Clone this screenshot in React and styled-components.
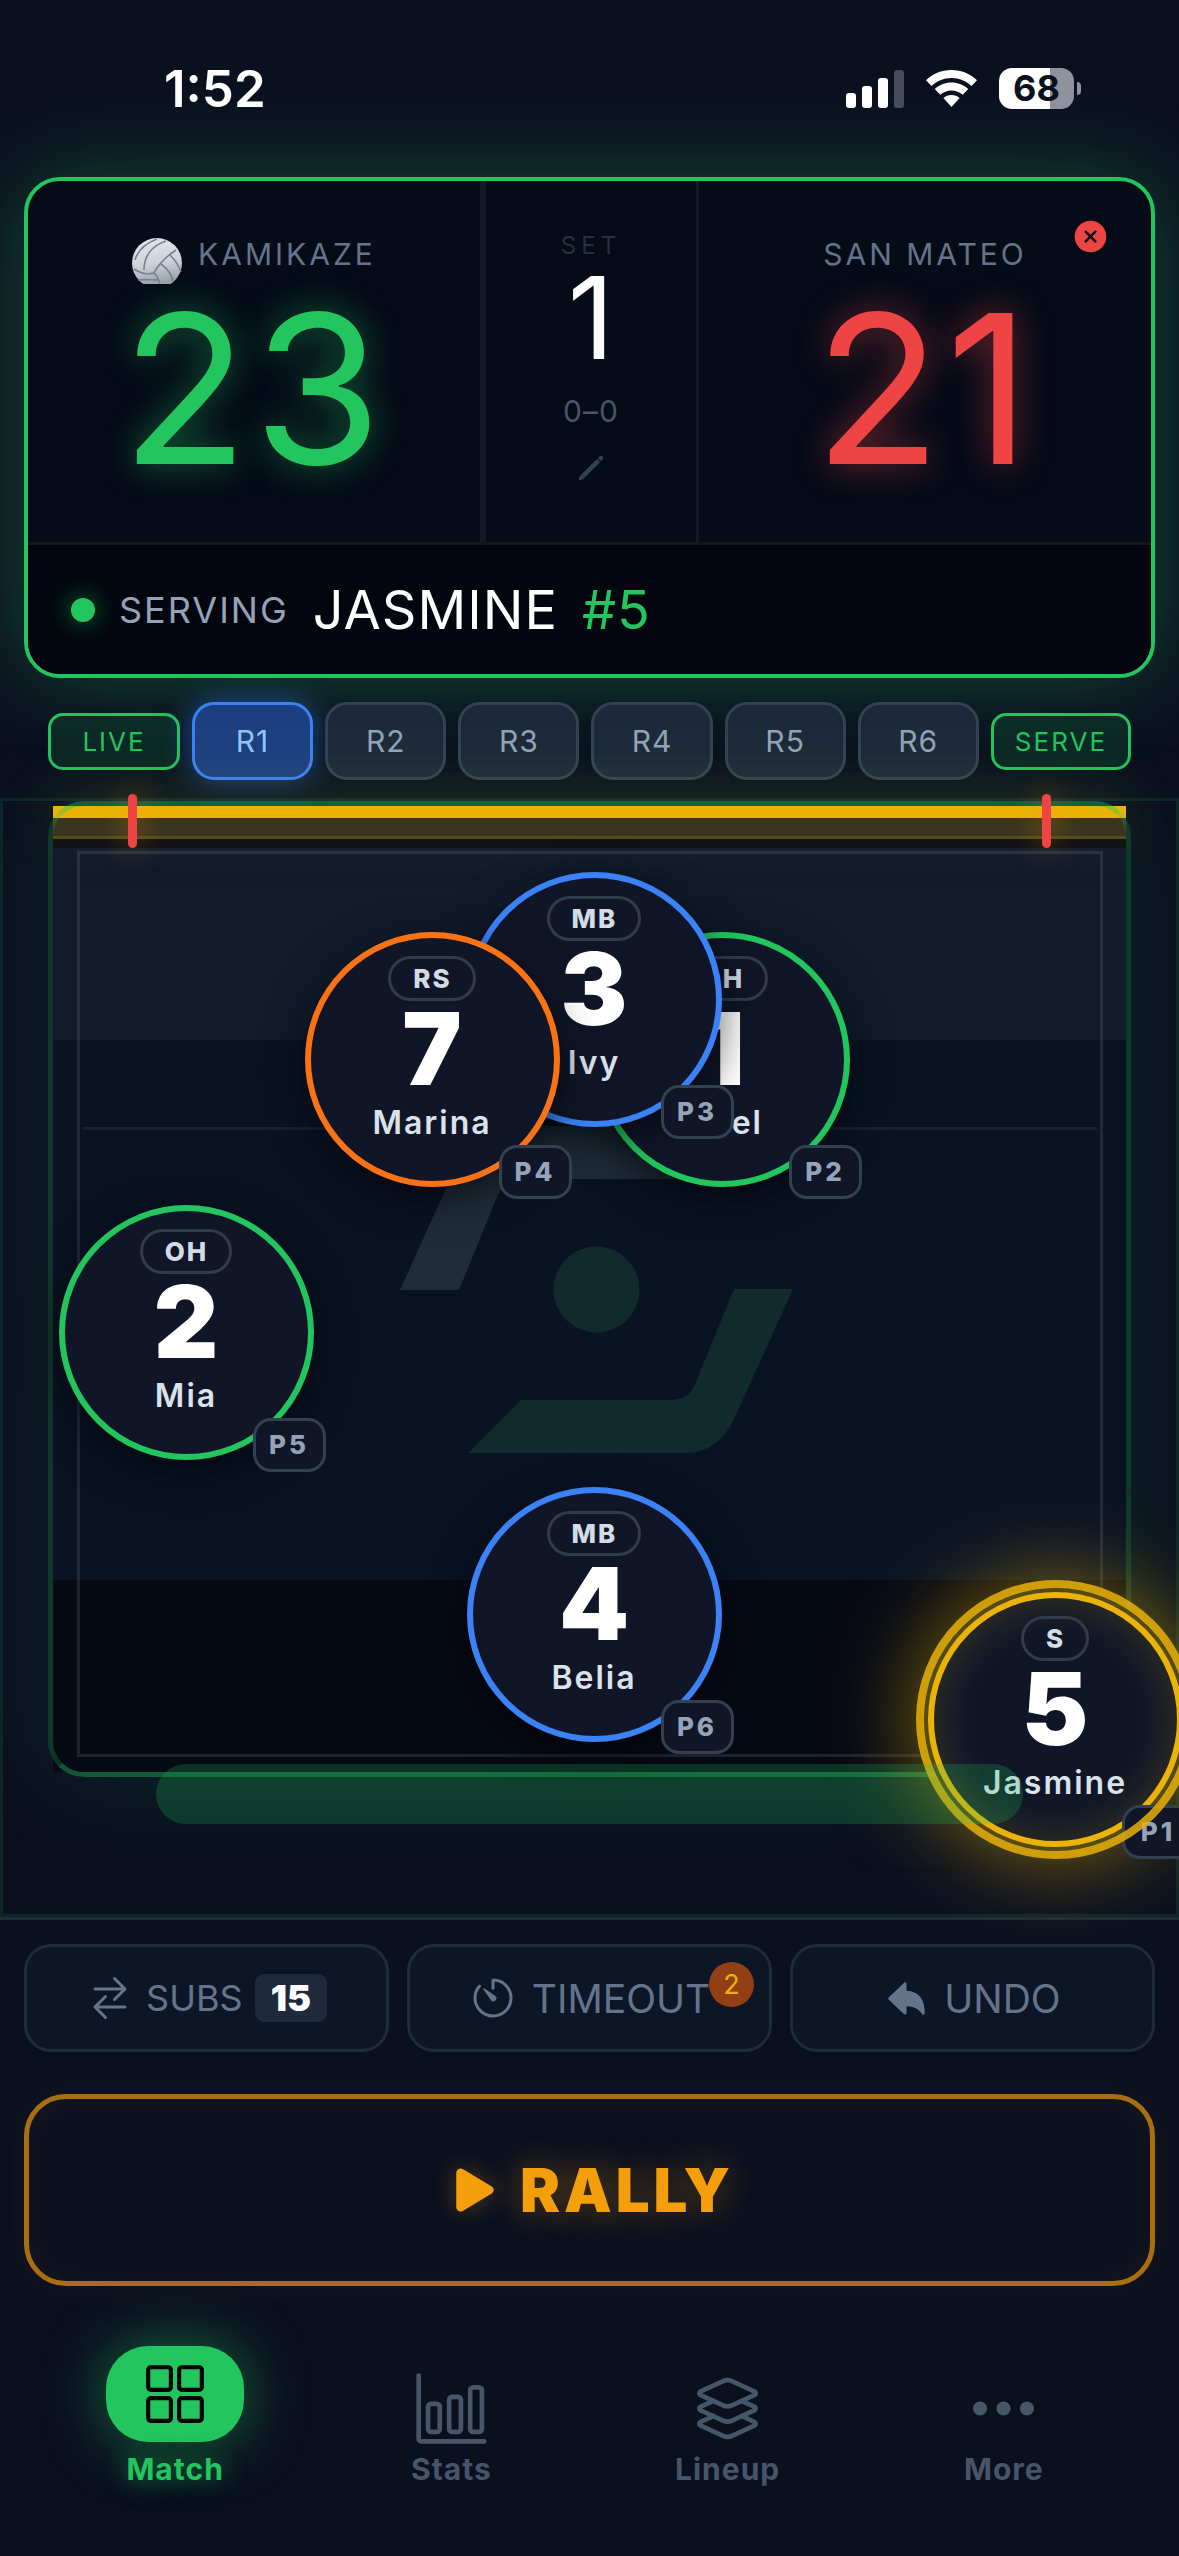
import React from 'react'
import styled, { createGlobalStyle, css } from 'styled-components'
import {
  IoArrowUndo,
  IoBarChartOutline,
  IoCloseCircle,
  IoEllipsisHorizontal,
  IoGridOutline,
  IoLayersOutline,
  IoPencil,
  IoPlay,
  IoSwapHorizontalOutline,
  IoTimerOutline,
} from 'react-icons/io5'

const green = '#22c55e'
const red = '#ef4444'
const blue = '#3b82f6'
const orange = '#f97316'
const gold = '#eab308'

const GlobalStyle = createGlobalStyle`
* { box-sizing: border-box; }
body {
  margin: 0;
  background: #0b101f;
  color: #fff;
  font-family: Inter, "Liberation Sans", sans-serif;
}
button {
  font: inherit;
  color: inherit;
  padding: 0;
  cursor: pointer;
}
svg { display: block; flex: none; }
`

const Page = styled.div`
display: flex;
flex-direction: column;
min-height: 100vh;
overflow: hidden;
`

/* status bar */
const StatusBar = styled.header`
display: flex;
justify-content: space-between;
align-items: center;
height: 177px;
padding: 0 98px 0 164px;
`
const Clock = styled.time`
font-size: 51px;
font-weight: 600;
line-height: 58px;
`
const StatusIcons = styled.div`
display: flex;
align-items: center;
gap: 22px;
`
const Battery = styled.div`
position: relative;
width: 75px;
height: 41px;
margin-right: 7px;
border-radius: 13px;
background: linear-gradient(90deg, #fff 68%, #8d929c 68%);
color: #0b101f;
font-size: 36px;
font-weight: 700;
line-height: 41px;
text-align: center;
&::after {
  content: "";
  position: absolute;
  left: 78px;
  top: 14px;
  width: 4px;
  height: 13px;
  border-radius: 0 4px 4px 0;
  background: #8d929c;
}
`

/* scoreboard */
const Scoreboard = styled.section`
margin: 0 24px;
border: 4px solid ${green};
border-radius: 36px;
background: #050b17;
box-shadow: 0 0 90px rgba(34, 197, 94, 0.32);
`
const ScoreRow = styled.div`
display: flex;
height: 361px;
`
const Team = styled.div`
position: relative;
display: flex;
flex: 1 1 0;
flex-direction: column;
align-items: center;
box-sizing: content-box;
padding-top: 55px;
&:first-child { border-right: 3px solid #131925; }
`
const TeamName = styled.h2`
display: flex;
gap: 16px;
height: 48px;
margin: 0 0 12px;
color: #64748b;
font-size: 30px;
font-weight: 400;
line-height: 36px;
letter-spacing: 3px;
`
const Score = styled.div`
color: ${p => p.$color};
font-size: 208px;
line-height: 184px;
letter-spacing: 5px;
text-shadow: 0 0 36px ${p => p.$glow};
`
const CloseButton = styled.button`
position: absolute;
top: 36px;
right: 41px;
border: 0;
background: none;
color: ${red};
`
const SetColumn = styled.div`
display: flex;
flex: 0 0 216px;
flex-direction: column;
align-items: center;
padding-top: 50px;
border: solid #131925;
border-width: 0 3px;
`
const SetLabel = styled.span`
color: #26313f;
font-size: 24px;
line-height: 30px;
letter-spacing: 5px;
`
const SetNumber = styled.strong`
font-size: 114px;
font-weight: 400;
line-height: 114px;
`
const SetTally = styled.span`
margin: 18px 0 24px;
color: #475569;
font-size: 30px;
line-height: 36px;
letter-spacing: 1px;
`
const EditButton = styled.button`
border: 0;
background: none;
color: #334155;
`
const ServingRow = styled.div`
display: flex;
align-items: center;
height: 132px;
padding-left: 43px;
border-top: 3px solid #13161b;
border-radius: 0 0 32px 32px;
background: #03060e;
font-size: 54px;
letter-spacing: 1px;
`
const ServingDot = styled.i`
width: 24px;
height: 24px;
border-radius: 50%;
background: ${green};
box-shadow: 0 0 24px rgba(34, 197, 94, 0.6);
`
const ServingLabel = styled.span`
margin: 0 24px;
color: #94a3b8;
font-size: 36px;
letter-spacing: 2px;
`
const ServerNumber = styled.span`
margin-left: 24px;
color: ${green};
`

/* rotations */
const Rotations = styled.div`
display: flex;
align-items: center;
gap: 12px;
padding: 24px 48px 18px;
`
const ModeButton = styled.button`
min-width: 132px;
height: 57px;
padding: 0 21px;
border: 3px solid ${green};
border-radius: 15px;
background: rgba(34, 197, 94, 0.12);
color: ${green};
font-size: 26px;
letter-spacing: 2px;
`
const RotationButton = styled.button`
flex: 1;
height: 78px;
border: 3px solid #334155;
border-radius: 22px;
background: #1e293b;
color: #94a3b8;
font-size: 30px;
letter-spacing: 1px;
${p => p.$active && css`
  border-color: ${blue};
  background: #1e3f82;
  color: #93c5fd;
  box-shadow: 0 0 30px rgba(59, 130, 246, 0.5);
`}
`

/* court */
const CourtArea = styled.main`
position: relative;
padding: 0 45px 137px;
border: 3px solid rgba(34, 197, 94, 0.12);
`
const Court = styled.div`
position: relative;
padding: 5px;
border-radius: 36px;
box-shadow: 0 0 110px rgba(34, 197, 94, 0.12);
`
const CourtFrame = styled.div`
position: absolute;
inset: 0;
border: 5px solid rgba(34, 197, 94, 0.22);
border-top-color: rgba(34, 197, 94, 0.4);
border-bottom-color: rgba(34, 197, 94, 0.4);
border-radius: 36px;
`
const NetTape = styled.div`
position: relative;
height: 12px;
background: ${gold};
box-shadow: 0 0 60px rgba(234, 179, 8, 0.35);
`
const NetMesh = styled.div`
position: relative;
height: 21px;
border-bottom: 3px solid #544a1a;
background: #38341f;
`
const NetShadow = styled.div`
position: relative;
height: 9px;
background: #101216;
`
const Zone = styled.div`
height: ${p => p.$height}px;
background: ${p => p.$fill};
`
const Antenna = styled.i`
position: absolute;
top: -7px;
${p => p.$side}: 80px;
width: 9px;
height: 54px;
border-radius: 5px;
background: ${red};
box-shadow: 0 0 30px rgba(249, 150, 22, 0.6);
`
const CourtLines = styled.div`
position: absolute;
inset: 50px 28px 20px 29px;
border: 3px solid rgba(148, 163, 184, 0.16);
&::after {
  content: "";
  position: absolute;
  top: 273px;
  left: 3px;
  right: 3px;
  height: 3px;
  background: rgba(148, 163, 184, 0.1);
}
`
const Watermark = styled.svg`
position: absolute;
top: 325px;
left: calc(50% - 190px);
`
const ServeZone = styled.div`
position: absolute;
bottom: 90px;
left: 153px;
right: 153px;
height: 60px;
border-radius: 30px;
background: rgba(34, 197, 94, 0.22);
pointer-events: none;
`
const Token = styled.button`
position: absolute;
top: ${p => p.$y}px;
left: calc(50% + ${p => p.$x}px);
display: flex;
flex-direction: column;
align-items: center;
width: 255px;
height: 255px;
margin-left: -128px;
padding-top: 18px;
border: 6px solid ${p => p.$color};
border-radius: 50%;
background: #101628;
box-shadow: 0 12px 42px rgba(0, 0, 0, 0.6);
${p => p.$serving && css`
  box-shadow: 0 0 0 4px #54491a, 0 0 90px 8px rgba(234, 179, 8, 0.6), inset 0 0 45px rgba(234, 179, 8, 0.2);
  &::after {
    content: "";
    position: absolute;
    inset: -18px;
    border: 8px solid rgba(234, 179, 8, 0.84);
    border-radius: 50%;
  }
`}
`
const Role = styled.span`
height: 45px;
padding: 0 21px 0 22px;
border: 3px solid #303c4c;
border-radius: 23px;
color: #d3dbe5;
font-size: 26px;
font-weight: 800;
line-height: 39px;
letter-spacing: 2px;
`
const Jersey = styled.span`
font-size: 100px;
font-weight: 900;
line-height: 95px;
`
const PlayerName = styled.span`
margin-top: 7px;
color: #dbe2ea;
font-size: 32px;
font-weight: 600;
line-height: 40px;
letter-spacing: 2px;
`
const Spot = styled.span`
position: absolute;
right: -18px;
bottom: -18px;
min-width: 73px;
height: 54px;
padding: 0 12px;
border: 3px solid #334050;
border-radius: 18px;
background: #101628;
color: #94a3b8;
font-size: 26px;
font-weight: 800;
line-height: 48px;
letter-spacing: 3px;
`

/* controls */
const Controls = styled.section`
padding: 24px 24px 0;
border-top: 3px solid #1e293b;
`
const Actions = styled.div`
display: grid;
grid-template-columns: repeat(3, 1fr);
gap: 18px;
margin-bottom: 42px;
`
const ActionButton = styled.button`
position: relative;
display: flex;
justify-content: center;
align-items: center;
gap: ${p => p.$gap || 15}px;
height: 108px;
border: 3px solid #1e2b3a;
border-radius: 27px;
background: #0d1626;
color: #64748b;
font-size: ${p => p.$size || 39}px;
`
const SubsCount = styled.strong`
height: 48px;
padding: 0 16px;
border-radius: 9px;
background: #1e293b;
color: #fff;
font-weight: 900;
line-height: 48px;
`
const TimeoutCount = styled.span`
position: absolute;
top: 15px;
right: 15px;
width: 45px;
height: 45px;
border-radius: 50%;
background: #923f16;
color: ${gold};
font-size: 27px;
line-height: 45px;
`
const RallyButton = styled.button`
display: flex;
justify-content: center;
align-items: center;
gap: 15px;
width: 100%;
height: 192px;
border: 5px solid #a86e12;
border-radius: 42px;
background: none;
box-shadow: 0 0 36px rgba(245, 158, 11, 0.06), inset 0 0 36px rgba(245, 158, 11, 0.06);
color: #f59e0b;
font-size: 60px;
font-weight: 900;
letter-spacing: 4px;
text-shadow: 0 0 36px rgba(245, 158, 11, 0.4);
svg { filter: drop-shadow(0 0 12px rgba(245, 158, 11, 0.3)); }
`

/* tab bar */
const TabBar = styled.nav`
display: grid;
grid-template-columns: repeat(4, 1fr);
align-items: end;
padding: 60px 37px 69px;
`
const Tab = styled.a`
display: flex;
flex-direction: column;
align-items: center;
gap: 5px;
color: ${p => (p.$active ? green : '#475569')};
font-size: 30px;
font-weight: 700;
line-height: 36px;
letter-spacing: 1px;
text-decoration: none;
text-shadow: ${p => (p.$active ? '0 0 24px rgba(34, 197, 94, 0.6)' : 'none')};
`
const TabPill = styled.span`
display: flex;
justify-content: center;
align-items: center;
width: 138px;
height: 96px;
margin-bottom: 4px;
border-radius: 42px;
background: ${green};
box-shadow: 0 0 60px rgba(34, 197, 94, 0.5);
color: #000;
`

const Signal = () => (
  <svg width="58" height="38" viewBox="0 0 58 38" fill="#fff">
    <rect x="0" y="23" width="10" height="15" rx="3" />
    <rect x="16" y="16" width="10" height="22" rx="3" />
    <rect x="32" y="8" width="10" height="30" rx="3" />
    <rect x="48" y="0" width="10" height="38" rx="3" opacity="0.25" />
  </svg>
)

const Wifi = () => (
  <svg width="51" height="37" viewBox="0 0 51 37" fill="#fff">
    <path d="M25.500 0C35.500 0 44.500 4 51 10.300L45.500 16C40.300 11 33.300 8 25.500 8S10.700 11 5.500 16L0 10.300C6.500 4 15.500 0 25.500 0Z" />
    <path d="M25.500 12.500C32 12.500 37.800 15 42.200 19L36.700 24.700C33.700 22 29.800 20.400 25.500 20.400S17.300 22 14.300 24.700L8.800 19C13.200 15 19 12.500 25.500 12.500Z" />
    <path d="M25.500 25C28.700 25 31.500 26.100 33.600 28.100L25.500 37L17.400 28.100C19.500 26.100 22.300 25 25.500 25Z" />
  </svg>
)

const Volleyball = () => (
  <svg width="50" height="48" viewBox="0 0 50 48">
    <defs>
      <linearGradient id="ball" x1="0.4" y1="0" x2="0.6" y2="1">
        <stop offset="0" stopColor="#e3e6ea" />
        <stop offset="0.5" stopColor="#cdd1d8" />
        <stop offset="1" stopColor="#8f979f" />
      </linearGradient>
      <clipPath id="ballCut"><rect y="0" width="50" height="48" /></clipPath>
    </defs>
    <g clipPath="url(#ballCut)">
      <circle cx="25" cy="27" r="25" fill="url(#ball)" />
      <g fill="none" stroke="#75809a" strokeWidth="1.600">
        <path d="M2 33C8 37 15 39 22 37C26 29 35 20 44 14" />
        <path d="M22 37C26 41 28 46 28 52" />
        <path d="M3 24C6 14 14 7 25 3" />
        <path d="M12 34C12 22 18 10 34 5" />
        <path d="M29 28C36 33 40 39 41 46" />
        <path d="M38 19C43 24 47 30 49 36" />
        <path d="M6 44C13 43 19 44 27 44" />
      </g>
    </g>
  </svg>
)

const half = 'M334 163H393L335 291C325 314 308 327 285 327H68L121 274H268C282 274 290 270 296 256Z'

const players = [
  { number: 1, name: 'Ariel', role: 'OH', spot: 'P2', color: green, x: 133, y: 131 },
  { number: 3, name: 'Ivy', role: 'MB', spot: 'P3', color: blue, x: 5, y: 71 },
  { number: 7, name: 'Marina', role: 'RS', spot: 'P4', color: orange, x: -157, y: 131 },
  { number: 2, name: 'Mia', role: 'OH', spot: 'P5', color: green, x: -403, y: 404 },
  { number: 4, name: 'Belia', role: 'MB', spot: 'P6', color: blue, x: 5, y: 686 },
  { number: 5, name: 'Jasmine', role: 'S', spot: 'P1', color: gold, x: 466, y: 791, serving: true },
]

const Player = ({ player }) => (
  <Token $color={player.color} $x={player.x} $y={player.y} $serving={player.serving}>
    <Role>{player.role}</Role>
    <Jersey>{player.number}</Jersey>
    <PlayerName>{player.name}</PlayerName>
    <Spot>{player.spot}</Spot>
  </Token>
)

export default function App() {
  return (
    <Page>
      <GlobalStyle />
      <StatusBar>
        <Clock>1:52</Clock>
        <StatusIcons>
          <Signal />
          <Wifi />
          <Battery>68</Battery>
        </StatusIcons>
      </StatusBar>

      <Scoreboard>
        <ScoreRow>
          <Team>
            <TeamName><Volleyball />KAMIKAZE</TeamName>
            <Score $color={green} $glow="rgba(34, 197, 94, 0.5)">23</Score>
          </Team>
          <SetColumn>
            <SetLabel>SET</SetLabel>
            <SetNumber>1</SetNumber>
            <SetTally>0–0</SetTally>
            <EditButton aria-label="Edit set"><IoPencil size={30} /></EditButton>
          </SetColumn>
          <Team>
            <TeamName>SAN MATEO</TeamName>
            <Score $color={red} $glow="rgba(239, 68, 68, 0.5)">21</Score>
            <CloseButton aria-label="Close match"><IoCloseCircle size={39} /></CloseButton>
          </Team>
        </ScoreRow>
        <ServingRow>
          <ServingDot />
          <ServingLabel>SERVING</ServingLabel>
          <span>JASMINE</span>
          <ServerNumber>#5</ServerNumber>
        </ServingRow>
      </Scoreboard>

      <Rotations>
        <ModeButton>LIVE</ModeButton>
        {['R1', 'R2', 'R3', 'R4', 'R5', 'R6'].map(r => (
          <RotationButton key={r} $active={r === 'R1'}>{r}</RotationButton>
        ))}
        <ModeButton>SERVE</ModeButton>
      </Rotations>

      <CourtArea>
        <Court>
          <NetTape />
          <NetMesh />
          <NetShadow />
          <Zone $height={192} $fill="#111b2c" />
          <Zone $height={540} $fill="#0a1324" />
          <Zone $height={192} $fill="#060a15" />
          <CourtFrame />
          <CourtLines />
          <Antenna $side="left" />
          <Antenna $side="right" />
          <Watermark width="393" height="327" viewBox="0 0 393 327">
            <path d={half} fill="#1f2d39" transform="rotate(180 196.500 163.500)" />
            <circle cx="196.500" cy="163.500" r="43" fill="#112a2b" />
            <path d={half} fill="#112a2b" />
          </Watermark>
          {players.map(p => <Player key={p.number} player={p} />)}
        </Court>
        <ServeZone />
      </CourtArea>

      <Controls>
        <Actions>
          <ActionButton $size={36} $gap={12}>
            <IoSwapHorizontalOutline size={48} />
            SUBS
            <SubsCount>15</SubsCount>
          </ActionButton>
          <ActionButton>
            <IoTimerOutline size={48} />
            TIMEOUT
            <TimeoutCount>2</TimeoutCount>
          </ActionButton>
          <ActionButton>
            <IoArrowUndo size={45} />
            UNDO
          </ActionButton>
        </Actions>
        <RallyButton><IoPlay size={60} />RALLY</RallyButton>
      </Controls>

      <TabBar>
        <Tab href="#match" $active>
          <TabPill><IoGridOutline size={66} /></TabPill>
          Match
        </Tab>
        <Tab href="#stats"><IoBarChartOutline size={75} />Stats</Tab>
        <Tab href="#lineup"><IoLayersOutline size={75} />Lineup</Tab>
        <Tab href="#more"><IoEllipsisHorizontal size={75} />More</Tab>
      </TabBar>
    </Page>
  )
}
